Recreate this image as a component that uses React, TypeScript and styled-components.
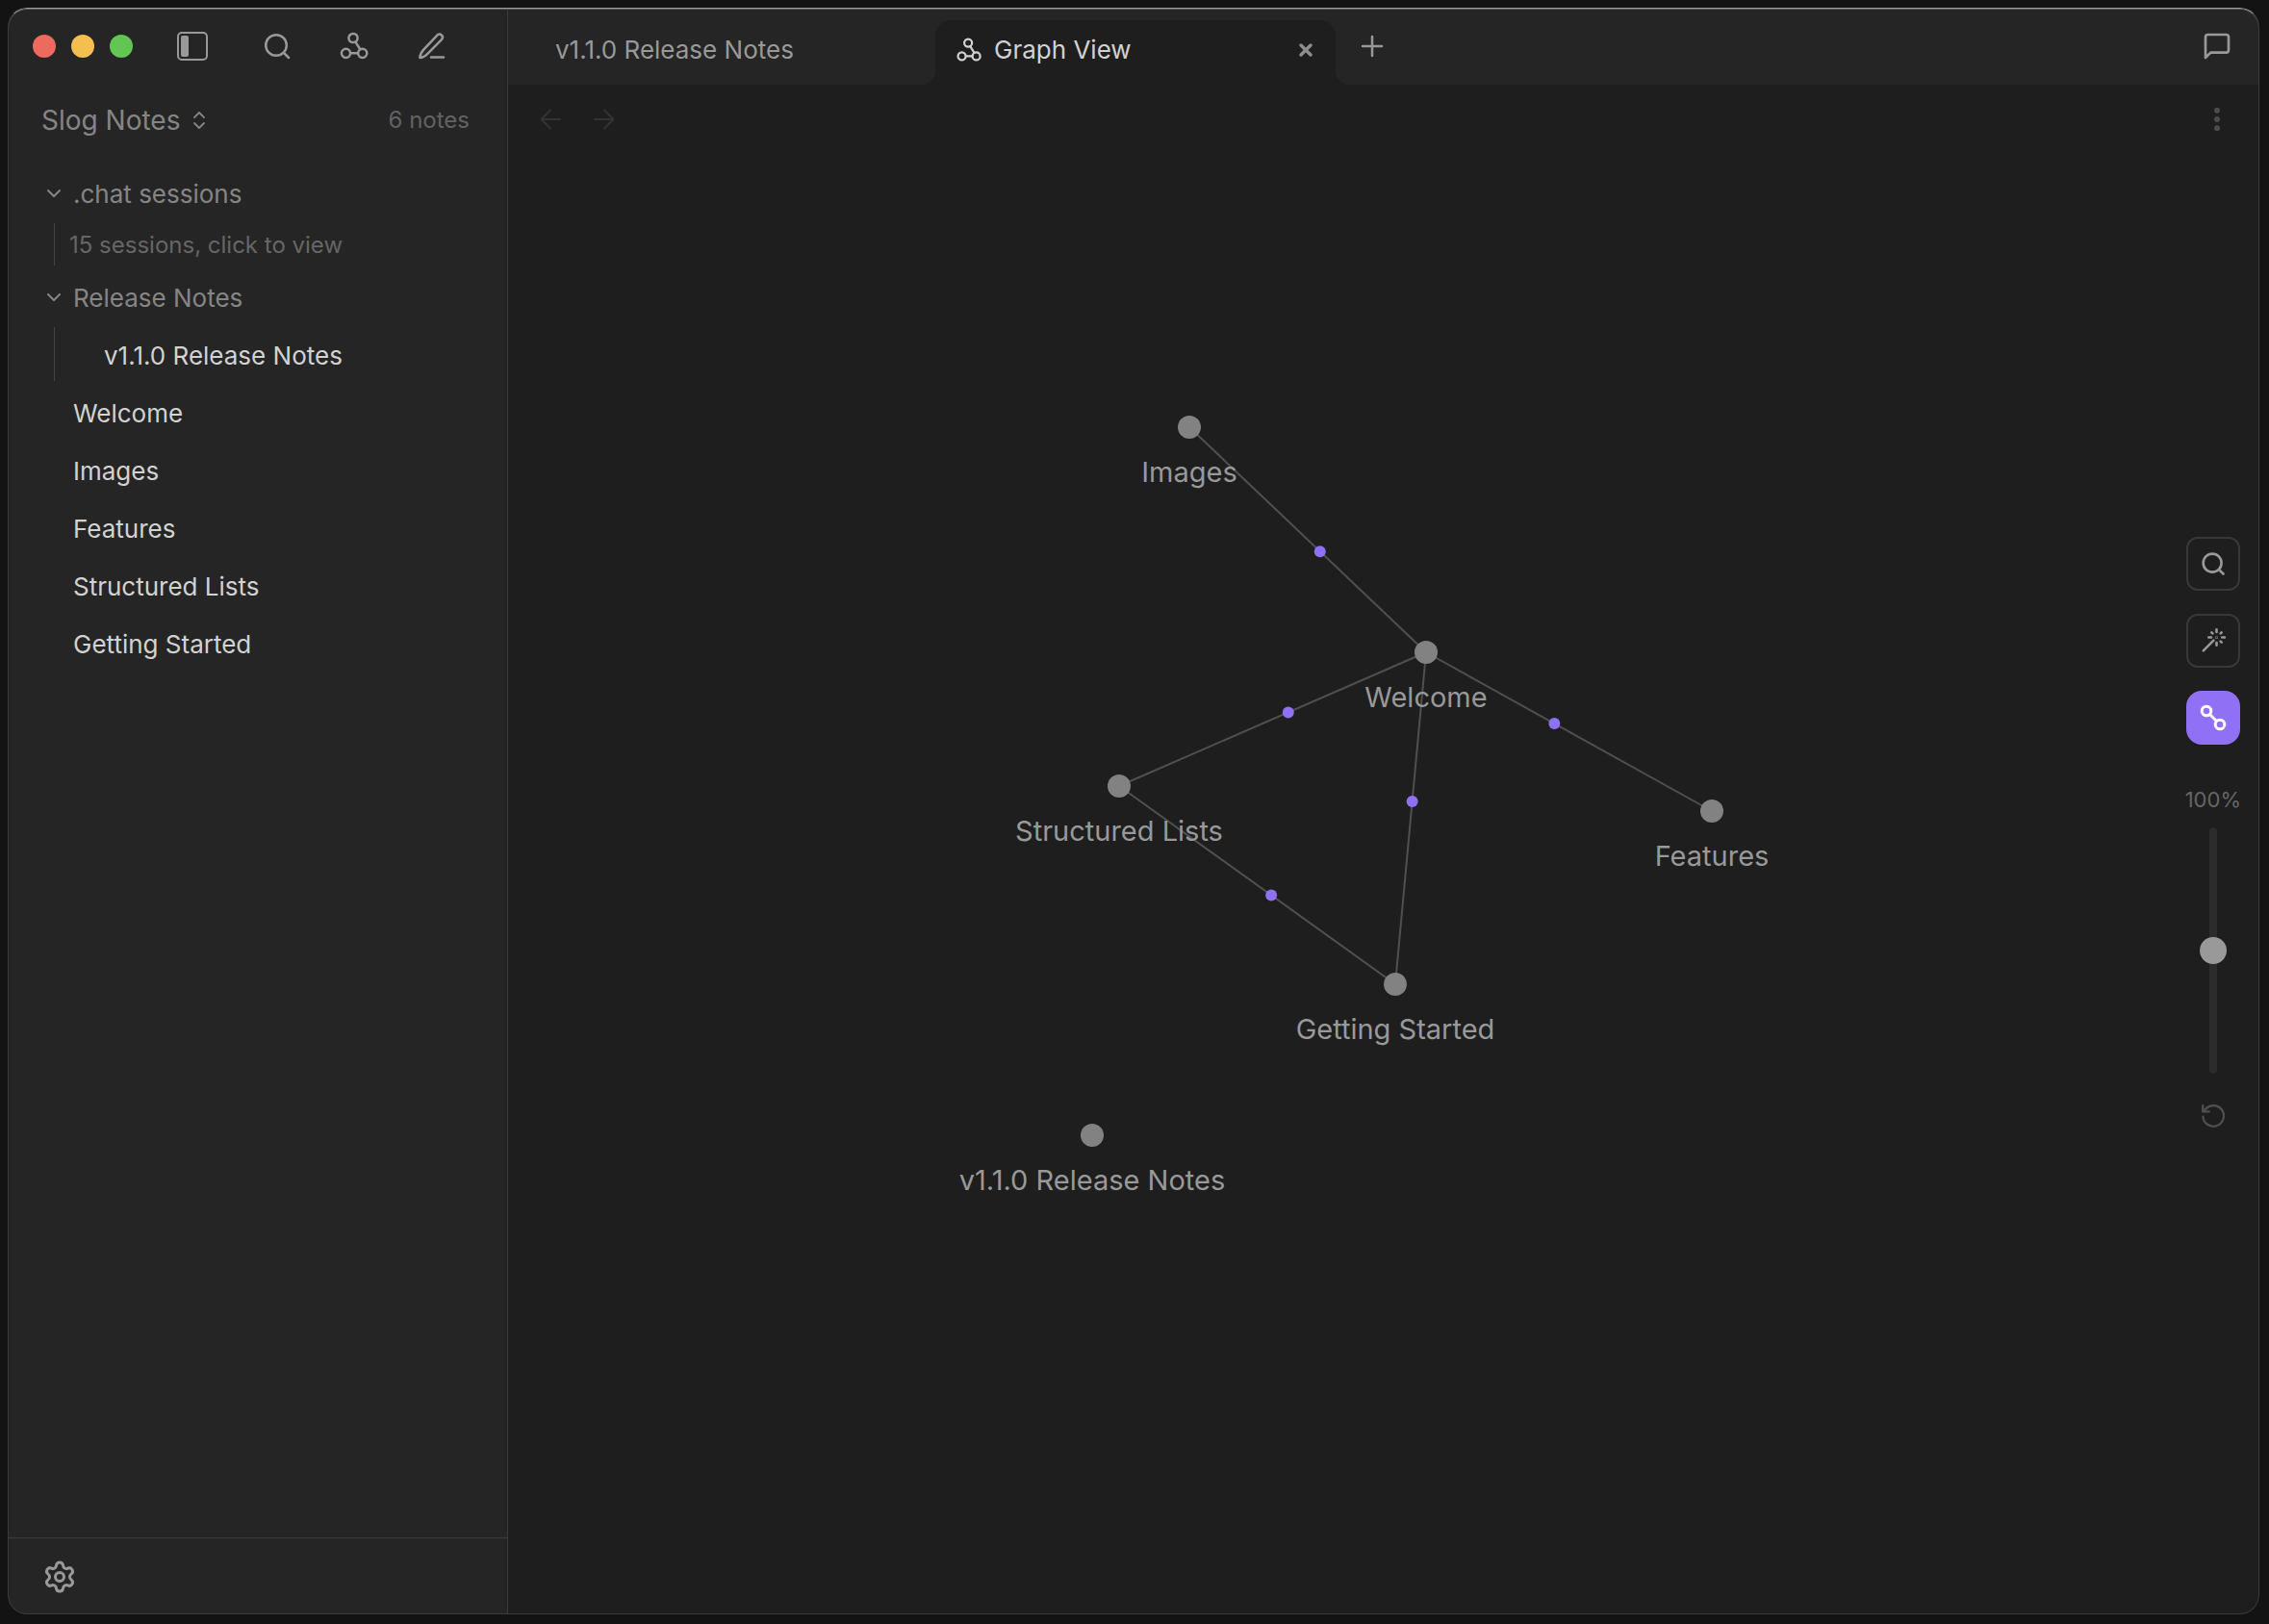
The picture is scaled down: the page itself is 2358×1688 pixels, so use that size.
import React, { useState } from "react";
import styled, { createGlobalStyle, css } from "styled-components";
import { Settings } from "lucide-react";

const GlobalStyle = createGlobalStyle`
  *, *::before, *::after { box-sizing: border-box; }
  body { margin: 0; background: #131313; }
  body, button, input { font-family: Inter, "Liberation Sans", sans-serif; }
  button { margin: 0; padding: 0; border: 0; background: none; color: inherit; cursor: pointer; }
  svg { display: block; }
`;

const Desktop = styled.div`
  height: 100vh;
  padding: 8px 10px 10px 8px;
`;

const Window = styled.div`
  position: relative;
  display: grid;
  grid-template-columns: 520px minmax(0, 1fr);
  height: 100%;
  border-radius: 20px;
  overflow: hidden;
  background: #1e1e1e;
  color: #999999;

  &::after {
    content: "";
    position: absolute;
    inset: 0;
    border: 1px solid #3b3b3b;
    border-top-color: #9c9c9c;
    border-radius: 20px;
    box-shadow: inset 0 1px 0 #5c5c5c;
    pointer-events: none;
  }
`;

const Sidebar = styled.aside`
  display: flex;
  flex-direction: column;
  border-right: 1px solid #3b3b3b;
  background: #252525;
`;

const SidebarBar = styled.div`
  display: flex;
  align-items: center;
  gap: 46px;
  height: 80px;
  padding: 0 63px 0 26px;
`;

const Lights = styled.div`
  display: flex;
  gap: 16px;
`;

const Light = styled.button<{ $color: string }>`
  width: 24px;
  height: 24px;
  border-radius: 50%;
  background: ${(p) => p.$color};
`;

const IconButton = styled.button`
  display: grid;
  place-items: center;
  width: 32px;
  height: 32px;
`;

const SidebarTools = styled.div`
  display: flex;
  flex: 1;
  justify-content: flex-end;
  gap: 48px;
`;

const Vault = styled.div`
  display: flex;
  align-items: center;
  justify-content: space-between;
  height: 74px;
  padding: 0 39px 0 35px;
`;

const VaultButton = styled.button`
  display: flex;
  align-items: center;
  gap: 10px;
  font-size: 28px;
  line-height: 36px;
  color: #858585;
`;

const Count = styled.span`
  font-size: 24px;
  line-height: 32px;
  color: #626262;
`;

const Tree = styled.nav`
  display: flex;
  flex: 1;
  flex-direction: column;
  padding: 6px 20px 0 40px;
`;

const Folder = styled.button`
  display: flex;
  align-items: center;
  gap: 12px;
  height: 64px;
  padding-top: 2px;
  font-size: 26px;
  color: #858585;
`;

const Children = styled.div`
  display: flex;
  flex-direction: column;
  margin-left: 8px;
  border-left: 1px solid #444444;
`;

const Sessions = styled.button`
  height: 44px;
  padding-left: 15px;
  font-size: 24px;
  text-align: left;
  color: #666666;
`;

const NoteList = styled.div`
  display: flex;
  flex-direction: column;
  gap: 4px;
  margin-top: 4px;
`;

const Note = styled.button<{ $indent: number }>`
  height: 56px;
  padding-top: 2px;
  padding-left: ${(p) => p.$indent}px;
  font-size: 26px;
  text-align: left;
  color: #d2d2d2;
`;

const SidebarFooter = styled.footer`
  display: flex;
  align-items: center;
  height: 80px;
  padding: 0 36px;
  border-top: 1px solid #3b3b3b;
`;

const SettingsButton = styled(IconButton)`
  width: 36px;
  height: 36px;
`;

const Main = styled.main`
  display: grid;
  grid-template-rows: 80px minmax(0, 1fr);
`;

const TabBar = styled.header`
  display: flex;
  align-items: center;
  padding-right: 28px;
  background: #252525;
`;

const Tab = styled.div<{ $active?: boolean }>`
  position: relative;
  display: flex;
  align-items: center;
  align-self: flex-end;
  height: 67px;
  width: 416px;
  padding: 0 24px 6px 21px;
  font-size: 26px;

  ${(p) =>
    p.$active
      ? css`
          border-radius: 16px 16px 0 0;
          background: #1e1e1e;
          color: #d2d2d2;

          &::before,
          &::after {
            content: "";
            position: absolute;
            bottom: 0;
            width: 16px;
            height: 16px;
          }
          &::before {
            right: 100%;
            background: radial-gradient(circle at 0 0, #252525 16px, #1e1e1e 17px);
          }
          &::after {
            left: 100%;
            background: radial-gradient(circle at 100% 0, #252525 16px, #1e1e1e 17px);
          }
        `
      : css`
          width: 444px;
          padding-left: 49px;
        `}
`;

const TabLabel = styled.button`
  display: flex;
  flex: 1;
  align-items: center;
  gap: 12px;
  font: inherit;
  text-align: left;
`;

const CloseButton = styled.button`
  color: #8e8e8e;
`;

const AddButton = styled(IconButton)`
  margin-left: 22px;
`;

const ChatButton = styled(IconButton)`
  margin-left: auto;
`;

const Stage = styled.section`
  display: grid;
  grid-template: minmax(0, 1fr) / minmax(0, 1fr);

  > * { grid-area: 1 / 1; }
`;

const Canvas = styled.svg`
  width: 100%;
  height: 100%;
`;

const Edge = styled.line`
  stroke: #505050;
  stroke-width: 2px;
`;

const NodeDot = styled.circle`
  fill: #828282;
`;

const EdgeDot = styled.circle`
  fill: #9070f5;
`;

const NodeLabel = styled.text`
  fill: #999999;
  font-family: Inter, "Liberation Sans", sans-serif;
  font-size: 29px;
  text-anchor: middle;
`;

const PaneBar = styled.div`
  display: flex;
  align-items: center;
  align-self: start;
  gap: 24px;
  height: 72px;
  padding: 0 28px;
  color: #333333;
  z-index: 1;
`;

const MenuButton = styled(IconButton)`
  margin-left: auto;
  color: #4c4c4c;
`;

const Rail = styled.div`
  display: flex;
  flex-direction: column;
  align-items: center;
  align-self: center;
  justify-self: end;
  gap: 24px;
  margin: 0 19px 32px 0;
  z-index: 1;
`;

const RailButton = styled.button<{ $on?: boolean }>`
  display: grid;
  place-items: center;
  width: 56px;
  height: 56px;
  border: 2px solid ${(p) => (p.$on ? "#9070f5" : "#383838")};
  border-radius: ${(p) => (p.$on ? 16 : 12)}px;
  background: ${(p) => (p.$on ? "#9070f5" : "transparent")};
  color: ${(p) => (p.$on ? "#ffffff" : "#999999")};
`;

const Zoom = styled.div`
  display: flex;
  flex-direction: column;
  align-items: center;
  gap: 14px;
  padding-top: 18px;
  font-size: 22px;
  line-height: 30px;
  color: #666666;
`;

const ZoomSlider = styled.input`
  appearance: none;
  writing-mode: vertical-lr;
  direction: rtl;
  width: 28px;
  height: 256px;
  margin: 0;
  background: transparent;

  &::-webkit-slider-runnable-track {
    width: 8px;
    border-radius: 4px;
    background: #2c2c2c;
  }

  &::-webkit-slider-thumb {
    appearance: none;
    width: 28px;
    height: 28px;
    margin-left: -10px;
    border-radius: 50%;
    background: #999999;
  }
`;

const ResetButton = styled(IconButton)`
  margin-top: 4px;
  color: #505050;
`;

type IconProps = { size: number; stroke: number; box?: number; children: React.ReactNode };

const Icon = ({ size, stroke, box = 32, children }: IconProps) => (
  <svg
    width={size}
    height={size}
    viewBox={`0 0 ${box} ${box}`}
    fill="none"
    stroke="currentColor"
    strokeWidth={stroke}
    strokeLinecap="round"
    strokeLinejoin="round"
    aria-hidden="true"
  >
    {children}
  </svg>
);

const PanelIcon = () => (
  <Icon size={32} stroke={2}>
    <rect x="1" y="2" width="30" height="28" rx="4" />
    <rect x="4" y="5" width="8" height="22" rx="2" fill="currentColor" stroke="none" />
  </Icon>
);

const SearchIcon = ({ size = 32, stroke = 2.5 }: { size?: number; stroke?: number }) => (
  <Icon size={size} stroke={stroke}>
    <circle cx="15" cy="15" r="10.8" />
    <path d="m23 23 5 5" />
  </Icon>
);

const GraphIcon = ({ size = 32 }: { size?: number }) => (
  <Icon size={size} stroke={2.5}>
    <circle cx="15" cy="7.5" r="4.6" />
    <circle cx="7.5" cy="23.3" r="4.6" />
    <circle cx="24.7" cy="23.3" r="4.6" />
    <path d="M12.2 23.3h7.8M17.4 11.6l4.9 7.6" />
  </Icon>
);

const PenIcon = () => (
  <Icon size={32} stroke={2.5}>
    <path d="M22.6 4.4a3.2 3.2 0 0 1 4.6 4.4L12.6 23.6c-2 2-4.6 4.2-8.2 4.4 0-3.4 1.6-6 3.6-8.2Z" />
    <path d="M16 27.6h13" />
  </Icon>
);

const ChatIcon = () => (
  <Icon size={32} stroke={2} box={24}>
    <path d="M21 15a2 2 0 0 1-2 2H7l-4 4V5a2 2 0 0 1 2-2h14a2 2 0 0 1 2 2z" />
  </Icon>
);

const WandIcon = () => (
  <Icon size={32} stroke={2.6}>
    <path d="M5.8 26.3 16.4 15.7" />
    <path d="M19.5 4.3V7M19.5 18v2.7M11.3 12.5H14M25.2 12.5h2.7M14.3 7.3l1.1 1.1M24.7 7.3l-1.1 1.1M23.6 16.6l1.1 1.1" />
    <circle cx="19.5" cy="12.5" r="0.3" />
  </Icon>
);

const LinkIcon = () => (
  <Icon size={32} stroke={3}>
    <circle cx="9" cy="9" r="4.8" />
    <circle cx="23" cy="23" r="4.8" />
    <path d="m12.5 12.5 7 7" />
  </Icon>
);

const ResetIcon = () => (
  <Icon size={32} stroke={2.2}>
    <path d="M5.4 16.500a10.800 10.800 0 1 0 3-8.100L5.4 11" />
    <path d="M5.2 5v6.4h6.6" />
  </Icon>
);

const FolderChevron = () => (
  <Icon size={16} stroke={2} box={16}>
    <path d="m2 5 6 6 6-6" />
  </Icon>
);

const ORIGIN = { x: 528, y: 88 };

const nodes = {
  images: { x: 1236, y: 444, label: "Images" },
  welcome: { x: 1482, y: 678, label: "Welcome" },
  lists: { x: 1163, y: 817, label: "Structured Lists" },
  features: { x: 1779, y: 843, label: "Features" },
  started: { x: 1450, y: 1023, label: "Getting Started" },
  release: { x: 1135, y: 1180, label: "v1.1.0 Release Notes" },
};

type NodeId = keyof typeof nodes;

const edges: { from: NodeId; to: NodeId; at: number }[] = [
  { from: "images", to: "welcome", at: 0.552 },
  { from: "welcome", to: "lists", at: 0.449 },
  { from: "lists", to: "started", at: 0.551 },
  { from: "welcome", to: "started", at: 0.449 },
  { from: "welcome", to: "features", at: 0.449 },
];

const notes = ["Welcome", "Images", "Features", "Structured Lists", "Getting Started"];

function GraphCanvas() {
  return (
    <Canvas viewBox={`${ORIGIN.x} ${ORIGIN.y} 1820 1590`} role="img" aria-label="Note graph">
      {edges.map(({ from, to }) => (
        <Edge key={from + to} x1={nodes[from].x} y1={nodes[from].y} x2={nodes[to].x} y2={nodes[to].y} />
      ))}
      {edges.map(({ from, to, at }) => (
        <EdgeDot
          key={from + to}
          cx={nodes[from].x + (nodes[to].x - nodes[from].x) * at}
          cy={nodes[from].y + (nodes[to].y - nodes[from].y) * at}
          r="6"
        />
      ))}
      {Object.values(nodes).map((n) => (
        <g key={n.label}>
          <NodeDot cx={n.x} cy={n.y} r="12" />
          <NodeLabel x={n.x} y={n.y + 57}>
            {n.label}
          </NodeLabel>
        </g>
      ))}
    </Canvas>
  );
}

export default function App() {
  const [zoom, setZoom] = useState(100);

  return (
    <>
      <GlobalStyle />
      <Desktop>
        <Window>
          <Sidebar>
            <SidebarBar>
              <Lights>
                <Light $color="#ed6a5e" aria-label="Close window" />
                <Light $color="#f5bf4f" aria-label="Minimize window" />
                <Light $color="#62c554" aria-label="Zoom window" />
              </Lights>
              <IconButton aria-label="Toggle sidebar">
                <PanelIcon />
              </IconButton>
              <SidebarTools>
                <IconButton aria-label="Search">
                  <SearchIcon />
                </IconButton>
                <IconButton aria-label="Graph view">
                  <GraphIcon />
                </IconButton>
                <IconButton aria-label="New note">
                  <PenIcon />
                </IconButton>
              </SidebarTools>
            </SidebarBar>
            <Vault>
              <VaultButton>
                Slog Notes
                <Icon size={20} stroke={1.8} box={20}>
                  <path d="m5 7 5-5 5 5M5 13l5 5 5-5" />
                </Icon>
              </VaultButton>
              <Count>6 notes</Count>
            </Vault>
            <Tree aria-label="Notes">
              <Folder>
                <FolderChevron />
                .chat sessions
              </Folder>
              <Children>
                <Sessions>15 sessions, click to view</Sessions>
              </Children>
              <Folder>
                <FolderChevron />
                Release Notes
              </Folder>
              <Children>
                <Note $indent={51}>v1.1.0 Release Notes</Note>
              </Children>
              <NoteList>
                {notes.map((name) => (
                  <Note key={name} $indent={28}>
                    {name}
                  </Note>
                ))}
              </NoteList>
            </Tree>
            <SidebarFooter>
              <SettingsButton aria-label="Settings">
                <Settings size={36} />
              </SettingsButton>
            </SidebarFooter>
          </Sidebar>
          <Main>
            <TabBar>
              <Tab>
                <TabLabel>v1.1.0 Release Notes</TabLabel>
              </Tab>
              <Tab $active>
                <TabLabel>
                  <GraphIcon size={28} />
                  Graph View
                </TabLabel>
                <CloseButton aria-label="Close tab">
                  <Icon size={14} stroke={3.4} box={14}>
                    <path d="m2 2 10 10M12 2 2 12" />
                  </Icon>
                </CloseButton>
              </Tab>
              <AddButton aria-label="New tab">
                <Icon size={32} stroke={2.5}>
                  <path d="M16 6v20M6 16h20" />
                </Icon>
              </AddButton>
              <ChatButton aria-label="Open chat">
                <ChatIcon />
              </ChatButton>
            </TabBar>
            <Stage>
              <GraphCanvas />
              <PaneBar>
                <IconButton aria-label="Back">
                  <Icon size={32} stroke={2}>
                    <path d="M26 16H6.500M16 6.500 6.500 16l9.500 9.500" />
                  </Icon>
                </IconButton>
                <IconButton aria-label="Forward">
                  <Icon size={32} stroke={2}>
                    <path d="M6 16h19.500M16 6.500 25.500 16 16 25.500" />
                  </Icon>
                </IconButton>
                <MenuButton aria-label="More options">
                  <Icon size={32} stroke={0}>
                    <g fill="currentColor">
                      <circle cx="16" cy="6.700" r="3" />
                      <circle cx="16" cy="16" r="3" />
                      <circle cx="16" cy="25.300" r="3" />
                    </g>
                  </Icon>
                </MenuButton>
              </PaneBar>
              <Rail>
                <RailButton aria-label="Search graph">
                  <SearchIcon size={28} stroke={3} />
                </RailButton>
                <RailButton aria-label="Arrange graph">
                  <WandIcon />
                </RailButton>
                <RailButton $on aria-label="Show links">
                  <LinkIcon />
                </RailButton>
                <Zoom>
                  <label htmlFor="zoom">{zoom}%</label>
                  <ZoomSlider
                    id="zoom"
                    type="range"
                    min={0}
                    max={200}
                    value={zoom}
                    onChange={(e) => setZoom(Number(e.target.value))}
                  />
                </Zoom>
                <ResetButton aria-label="Reset zoom">
                  <ResetIcon />
                </ResetButton>
              </Rail>
            </Stage>
          </Main>
        </Window>
      </Desktop>
    </>
  );
}
